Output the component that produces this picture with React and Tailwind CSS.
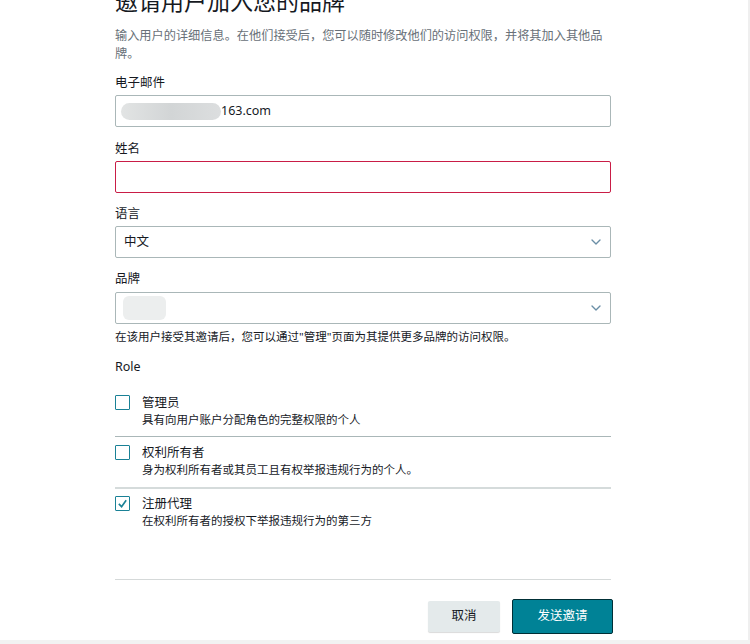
import { ChevronDown } from "lucide-react";

const font = { fontFamily: '"Noto Sans", "Noto Sans CJK SC", sans-serif' };

function Label({ children, className = "" }) {
    return (
        <div className={`text-[12.5px] leading-[18px] text-[#16191f] ${className}`}>
            {children}
        </div>
    );
}

function Select({ children, className = "" }) {
    return (
        <div
            className={`h-[32px] border border-[#aab7b8] rounded-[2px] flex items-center justify-between pl-[8px] pr-[6px] bg-white ${className}`}
        >
            <div className="text-[12.5px] text-[#16191f] flex items-center">{children}</div>
            <ChevronDown size={16} strokeWidth={2} className="text-[#6a8ea6]" />
        </div>
    );
}

function RoleRow({ title, desc, checked, className = "" }) {
    return (
        <div className={`flex ${className}`}>
            <div className="pt-[1px]">
                <div className="w-[15px] h-[15px] border-[1.5px] border-[#1a8196] rounded-[1px] flex items-center justify-center bg-white">
                    {checked && (
                        <svg width="11" height="11" viewBox="0 0 12 12">
                            <polyline
                                points="2,6.5 5,9.5 10,2.5"
                                fill="none"
                                stroke="#1a8196"
                                strokeWidth="1.8"
                            />
                        </svg>
                    )}
                </div>
            </div>
            <div className="ml-[12px]">
                <div className="text-[12.5px] leading-[18px] text-[#16191f]">{title}</div>
                <div className="text-[11.5px] leading-[16px] text-[#16191f]">{desc}</div>
            </div>
        </div>
    );
}

export default function App() {
    return (
        <div className="w-[750px] h-[644px] flex flex-col overflow-hidden bg-white" style={font}>
            <div className="flex flex-1 overflow-hidden">
                <div className="flex-1 overflow-hidden">
                    <div className="ml-[115px] w-[496px]">
                        <div className="mt-[-13px] text-[23px] leading-[28px] text-[#16191f]">
                            邀请用户加入您的品牌
                        </div>
                        <div className="mt-[12px] text-[12.2px] leading-[18px] text-[#687078]">
                            输入用户的详细信息。在他们接受后，您可以随时修改他们的访问权限，并将其加入其他品牌。
                        </div>

                        <Label className="mt-[11px]">电子邮件</Label>
                        <div className="mt-[3px] h-[32px] border border-[#aab7b8] rounded-[2px] flex items-center pl-[5px] bg-white">
                            <div className="w-[100px] h-[17px] rounded-full bg-gradient-to-r from-[#e2e4e4] via-[#d2d5d6] to-[#dcdedf]" />
                            <span className="text-[12.5px] text-[#16191f]">163.com</span>
                        </div>

                        <Label className="mt-[13px]">姓名</Label>
                        <div className="mt-[3px] h-[32px] border border-[#c91d46] rounded-[2px] bg-white" />

                        <Label className="mt-[12px]">语言</Label>
                        <Select className="mt-[3px]">中文</Select>

                        <Label className="mt-[12px]">品牌</Label>
                        <Select className="mt-[4px]">
                            <span className="w-[43px] h-[24px] rounded-[6px] bg-[#eceeee] -ml-[1px]" />
                        </Select>

                        <div className="mt-[5px] text-[11.5px] leading-[16px] text-[#16191f]">
                            在该用户接受其邀请后，您可以通过"管理"页面为其提供更多品牌的访问权限。
                        </div>

                        <Label className="mt-[13px]">Role</Label>

                        <RoleRow
                            className="mt-[18px]"
                            title="管理员"
                            desc="具有向用户账户分配角色的完整权限的个人"
                        />
                        <div className="mt-[8px] h-px bg-[#aab7b8]" />
                        <RoleRow
                            className="mt-[7px]"
                            title="权利所有者"
                            desc="身为权利所有者或其员工且有权举报违规行为的个人。"
                        />
                        <div className="mt-[9px] h-[2px] bg-[#d5dbdb]" />
                        <RoleRow
                            className="mt-[6px]"
                            title="注册代理"
                            desc="在权利所有者的授权下举报违规行为的第三方"
                            checked
                        />

                        <div className="mt-[50px] h-px bg-[#d5d9d9]" />

                        <div className="mt-[19px] flex justify-end items-center gap-[12px] -mr-[2px]">
                            <button className="w-[72px] h-[31px] rounded-[2px] bg-[#e4eaeb] shadow-[0_1px_1px_rgba(0,0,0,0.15)] text-[12.5px] text-[#16191f]">
                                取消
                            </button>
                            <button className="w-[101px] h-[35px] rounded-[2px] bg-[#008296] border border-[#002f36] text-[12.5px] text-white">
                                发送邀请
                            </button>
                        </div>
                    </div>
                </div>
                <div className="w-[2px] bg-[#efefef]" />
            </div>
            <div className="h-[4px] bg-[#f2f2f2]" />
        </div>
    );
}
